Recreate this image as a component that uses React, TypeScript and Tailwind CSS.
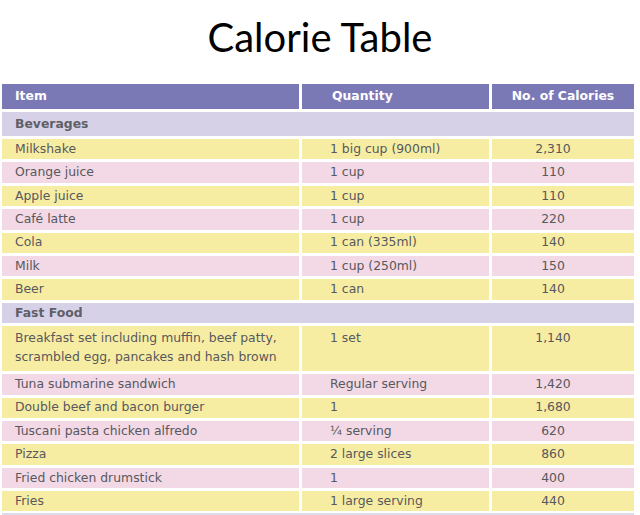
import React from 'react'

type Row = { item: string; qty: string; cal: string; tall?: boolean }

const beverages: Row[] = [
    { item: 'Milkshake', qty: '1 big cup (900ml)', cal: '2,310' },
    { item: 'Orange juice', qty: '1 cup', cal: '110' },
    { item: 'Apple juice', qty: '1 cup', cal: '110' },
    { item: 'Café latte', qty: '1 cup', cal: '220' },
    { item: 'Cola', qty: '1 can (335ml)', cal: '140' },
    { item: 'Milk', qty: '1 cup (250ml)', cal: '150' },
    { item: 'Beer', qty: '1 can', cal: '140' },
]

const fastFood: Row[] = [
    { item: 'Breakfast set including muffin, beef patty, scrambled egg, pancakes and hash brown', qty: '1 set', cal: '1,140', tall: true },
    { item: 'Tuna submarine sandwich', qty: 'Regular serving', cal: '1,420' },
    { item: 'Double beef and bacon burger', qty: '1', cal: '1,680' },
    { item: 'Tuscani pasta chicken alfredo', qty: '¼ serving', cal: '620' },
    { item: 'Pizza', qty: '2 large slices', cal: '860' },
    { item: 'Fried chicken drumstick', qty: '1', cal: '400' },
    { item: 'Fries', qty: '1 large serving', cal: '440' },
]

const Category = ({ label, tall }: { label: string; tall?: boolean }) => (
    <div className={`col-span-3 ${tall ? 'h-[24px]' : 'h-[20.4px]'} bg-[#d7d1e8] pl-[13px] flex items-center font-bold text-[#5f5f66]`}>
        {label}
    </div>
)

const DataRow = ({ row, i }: { row: Row; i: number }) => {
    const bg = i % 2 === 0 ? 'bg-[#f7eda2]' : 'bg-[#f2d9e5]'
    const h = row.tall ? 'h-[45px] items-start pt-[2px] leading-[19px]' : 'h-[20.4px] items-center'
    return (
        <>
            <div className={`${bg} ${h} flex pl-[13px] pr-2`}>{row.item}</div>
            <div className={`${bg} ${h} flex pl-[28px]`}>{row.qty}</div>
            <div className={`${bg} ${h} flex justify-center pr-[20px]`}>{row.cal}</div>
        </>
    )
}

export default function App() {
    return (
        <div className="w-[640px] h-[515px] bg-white overflow-hidden">
            <div className="h-[84px] pt-[17px] text-center text-[40px] leading-none text-black font-['Lato',sans-serif]">
                Calorie Table
            </div>
            <div className="ml-[2px] w-[632px] font-['DejaVu_Sans',sans-serif] text-[12.4px] text-[#58585e]">
                <div className="grid grid-cols-[297px_187px_142px] gap-x-[3px] gap-y-[3px]">
                    <div className="h-[25px] bg-[#7b78b6] flex items-center pl-[13px] font-bold text-white">Item</div>
                    <div className="h-[25px] bg-[#7b78b6] flex items-center pl-[30px] font-bold text-white">Quantity</div>
                    <div className="h-[25px] bg-[#7b78b6] flex items-center justify-center font-bold text-white">No. of Calories</div>

                    <Category label="Beverages" tall />
                    {beverages.map((r, i) => <DataRow key={r.item} row={r} i={i} />)}

                    <Category label="Fast Food" />
                    {fastFood.map((r, i) => <DataRow key={r.item} row={r} i={i} />)}
                </div>
                <div className="mt-[2px] h-[2px] bg-[#dcdcee]" />
            </div>
        </div>
    )
}
